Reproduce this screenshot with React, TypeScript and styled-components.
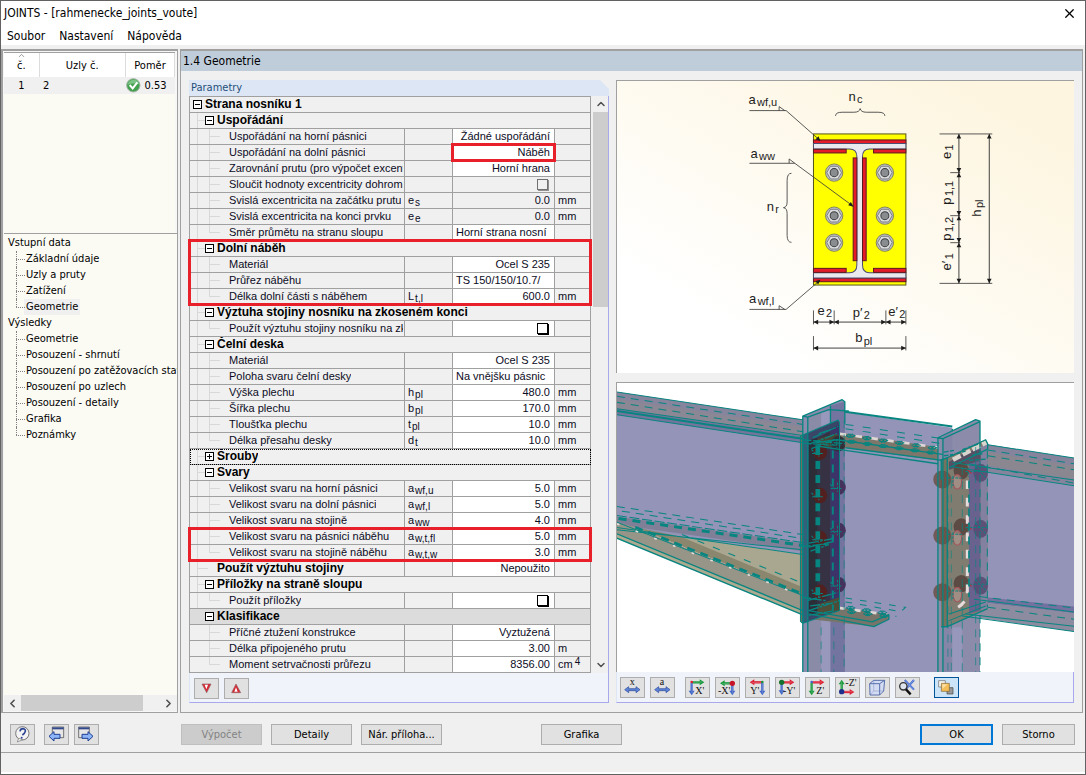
import React from "react";
import styled, { createGlobalStyle, css } from "styled-components";
import { X, ChevronUp, ChevronDown, ChevronLeft, ChevronRight } from "lucide-react";

const ui = `"DejaVu Sans Condensed", "DejaVu Sans", sans-serif`;
const gridFont = `"Liberation Sans", Arial, sans-serif`;

const GlobalStyle = createGlobalStyle`
  * { box-sizing: border-box; }
  body { margin: 0; background: #f0f0f0; color: #000; font: 11px/16px ${ui}; }
  button { font: inherit; color: inherit; padding: 0; }
`;

/* ---------- window frame ---------- */

const Window = styled.div`
  min-height: 100vh;
  display: flex;
  flex-direction: column;
  border: 1px solid #626262;
  background: #f0f0f0;
`;

const TitleBar = styled.header`
  display: flex;
  align-items: center;
  justify-content: space-between;
  height: 24px;
  padding: 0 8px 0 3px;
  background: #fff;
`;

const Title = styled.h1`
  margin: 0;
  font-size: 12px;
  font-weight: normal;
`;

const CloseButton = styled.button`
  display: flex;
  border: 0;
  background: none;
`;

const MenuBar = styled.nav`
  display: flex;
  gap: 14px;
  height: 20px;
  padding: 3px 6px 1px;
  margin-bottom: 4px;
  background: #fff;
`;

const MenuItem = styled.button`
  border: 0;
  background: none;
  font-size: 12px;
  line-height: 16px;
`;

const Workspace = styled.div`
  flex: 1;
  display: grid;
  grid-template-columns: 177px minmax(0, 1fr);
  gap: 2px;
  min-height: 0;
`;

/* ---------- left side ---------- */

const Sidebar = styled.aside`
  display: flex;
  flex-direction: column;
  min-width: 0;
  border: solid #a0a0a0;
  border-width: 2px 1px 1px 2px;
  padding: 1px 0 1px 1px;
  background: #f7f7f7;
`;

const CasePane = styled.div`
  height: 181px;
  margin-right: 2px;
  border-top: 1px solid #a0a0a0;
  background: #fbfbf4;
`;

const CaseTable = styled.table`
  width: 100%;
  border-collapse: collapse;
  table-layout: fixed;
`;

const CaseHead = styled.th`
  position: relative;
  height: 24px;
  padding: 2px 0 0;
  border-right: 1px solid #dcdcdc;
  background: #fff;
  font-weight: normal;
`;

const SortMark = styled(ChevronUp)`
  position: absolute;
  top: -2px;
  left: 13px;
  color: #777;
`;

const CaseCell = styled.td<{ $align?: string; $flush?: boolean }>`
  height: 17px;
  padding: ${(p) => (p.$flush ? "0" : "0 4px")};
  background: #f0f0f0;
  text-align: ${(p) => p.$align ?? "left"};
  vertical-align: middle;
`;

const Ratio = styled.span`
  display: flex;
  align-items: center;
  gap: 4px;
`;

const TreePane = styled.div`
  flex: 1;
  border-top: 1px solid #a0a0a0;
  padding: 1px 0 0 4px;
  overflow: hidden;
  background: #fbfbf4;
  white-space: nowrap;
`;

const TreeList = styled.ul`
  margin: 0;
  padding: 0;
  list-style: none;
`;

const TreeBranch = styled(TreeList)`
  margin-left: 8px;
`;

const TreeLeaf = styled.li`
  position: relative;
  height: 16px;
  padding-left: 8px;
  &::before {
    content: "";
    position: absolute;
    left: 0;
    top: 0;
    height: 16px;
    border-left: 1px dotted #808080;
  }
  &:last-child::before { height: 8px; }
  &::after {
    content: "";
    position: absolute;
    left: 0;
    top: 8px;
    width: 9px;
    border-top: 1px dotted #808080;
  }
`;

const TreeLink = styled.a<{ $current?: boolean }>`
  display: inline-block;
  height: 16px;
  padding: 0 2px;
  color: inherit;
  text-decoration: none;
  background: ${(p) => (p.$current ? "#f0f0f0" : "none")};
`;

const HScroll = styled.div`
  display: grid;
  grid-template-columns: 17px 122px 1fr 17px;
  height: 16px;
  background: #f0f0f0;
`;

const Thumb = styled.div`
  background: #cdcdcd;
`;

const ScrollButton = styled.button`
  display: flex;
  align-items: center;
  justify-content: center;
  border: 0;
  background: none;
  color: #505050;
`;

/* ---------- main panel ---------- */

const Main = styled.main`
  display: flex;
  flex-direction: column;
  min-width: 0;
  border: solid #a0a0a0;
  border-width: 2px 1px 1px 1px;
  margin-right: 2px;
`;

const PageTitle = styled.h2`
  height: 20px;
  margin: 0 0 9px;
  padding: 1px 2px;
  background: #bfcddb;
  font-size: 12px;
  font-weight: normal;
  line-height: 18px;
`;

const Columns = styled.div`
  flex: 1;
  display: grid;
  grid-template-columns: 420px minmax(0, 1fr);
  gap: 7px;
  padding: 0 8px 9px 8px;
`;

const ParamGroup = styled.section`
  display: flex;
  flex-direction: column;
`;

const GroupTitle = styled.h3`
  height: 16px;
  margin: 0;
  padding: 0 2px;
  background: #dce6f4;
  color: #1f4e79;
  font-size: 11px;
  font-weight: normal;
  clip-path: polygon(0 0, calc(100% - 9px) 0, 100% 9px, 100% 100%, 0 100%);
`;

const GridArea = styled.div`
  display: grid;
  grid-template-columns: minmax(0, 1fr) 17px;
  border-right: 1px solid #a8a8ec;
`;

const GridWrap = styled.div`
  position: relative;
`;

const Grid = styled.table`
  width: 100%;
  border-collapse: collapse;
  table-layout: fixed;
  background: #f0f0f0;
  color: #0c0c24;
  font: 11px/15px ${gridFont};
`;

const GridRow = styled.tr<{ $focus?: boolean }>`
  ${(p) => p.$focus && css`outline: 1px dotted #000; outline-offset: -1px;`}
`;

const GridCell = styled.td<{ $tone?: "edit" | "group"; $right?: boolean }>`
  height: 16px;
  padding: 0 4px 0 3px;
  border: 1px solid #a0a0a0;
  overflow: hidden;
  white-space: nowrap;
  line-height: 15px;
  text-align: ${(p) => (p.$right ? "right" : "left")};
  background: ${(p) => (p.$tone === "edit" ? "#fff" : p.$tone === "group" ? "#dcdcdc" : "#f0f0f0")};
`;

const NameCell = styled(GridCell)`
  padding: 0 1px 0 2px;
`;

const NameLine = styled.div`
  display: flex;
  height: 15px;
  overflow: hidden;
`;

const NameText = styled.span<{ $bold?: boolean; $leaf?: boolean }>`
  padding-left: ${(p) => (p.$leaf ? 13 : 1)}px;
  min-width: 0;
  overflow: hidden;
  color: ${(p) => (p.$bold ? "#000" : "inherit")};
  font-weight: ${(p) => (p.$bold ? "bold" : "normal")};
  font-size: ${(p) => (p.$bold ? 12 : 11)}px;
`;

const Guide = styled.span<{ $line?: "full" | "half"; $stub?: boolean }>`
  position: relative;
  flex: none;
  width: 12px;
  &::before {
    content: "";
    position: absolute;
    left: 5px;
    top: 0;
    height: ${(p) => (p.$line === "full" ? 15 : p.$line === "half" ? 8 : 0)}px;
    border-left: 1px solid #d8d8d8;
  }
  &::after {
    content: "";
    position: absolute;
    left: 5px;
    top: 7px;
    width: ${(p) => (p.$stub ? 11 : 0)}px;
    border-top: 1px solid #d8d8d8;
  }
`;

const Expander = styled.button`
  position: relative;
  flex: none;
  width: 9px;
  height: 9px;
  margin: 3px 2px 3px 1px;
  border: 1px solid #000;
  background:
    linear-gradient(#000, #000) 50% 50% / 5px 1px no-repeat,
    #fff;
  &[aria-expanded="false"] {
    background:
      linear-gradient(#000, #000) 50% 50% / 5px 1px no-repeat,
      linear-gradient(#000, #000) 50% 50% / 1px 5px no-repeat,
      #fff;
  }
`;

const Check = styled.input`
  appearance: none;
  display: block;
  width: 11px;
  height: 11px;
  margin: 2px 2px 2px auto;
  border: 1px solid #000;
  box-shadow: 1px 1px 0 #000;
  background: #fff;
  &:disabled {
    border-color: #707070;
    box-shadow: 1px 1px 0 #909090;
    background: #f0f0f0;
  }
`;

const Sub = styled.sub`
  margin-left: 1px;
  font-size: 10px;
  line-height: 0;
  vertical-align: -2px;
`;

const Sup = styled.sup`
  margin-left: 2px;
  font-size: 10px;
  line-height: 0;
  vertical-align: 3px;
`;

/* Red frame laid over a span of grid rows. */
const Marker = styled.div<{ $row: number; $rows: number; $value?: boolean }>`
  position: absolute;
  top: ${(p) => p.$row * 16 - 1}px;
  left: ${(p) => (p.$value ? "262px" : "-1px")};
  right: ${(p) => (p.$value ? "35px" : "-1px")};
  height: ${(p) => p.$rows * 16 + 3}px;
  border: 3px solid #e8202a;
  pointer-events: none;
`;

const VScroll = styled.div`
  display: grid;
  grid-template-rows: 16px 195px 1fr 16px;
  margin-left: 2px;
`;

const ButtonStrip = styled.div`
  display: flex;
  flex: 1;
  gap: 5px;
  padding: 5px 4px 2px;
  border: solid #a8a8ec;
  border-width: 0 1px 1px 0;
  border-left: 1px solid #dce6f4;
  background: #f0f4fa;
`;

const IconButton = styled.button<{ $pressed?: boolean; $gap?: number }>`
  display: flex;
  width: 25px;
  height: 21px;
  margin-left: ${(p) => p.$gap ?? 0}px;
  border: 1px solid ${(p) => (p.$pressed ? "#005499" : "#adadad")};
  background: ${(p) => (p.$pressed ? "#cce4f7" : "#e1e1e1")};
  & > svg { margin: -1px; flex: none; }
`;

const Graphics = styled.section`
  display: grid;
  grid-template-rows: 293px 299px 1fr;
  min-width: 0;
`;

const Picture = styled.div`
  border: 1px solid #a0a0a0;
  border-width: 1px 0 0 1px;
  background: linear-gradient(30deg, #fff 20%, #fdf5df 90%);
  & > svg { display: block; width: 100%; height: 100%; }
`;

const ModelView = styled(Picture)`
  margin-top: 9px;
  background: #fff;
`;

const ViewStrip = styled(ButtonStrip)`
  padding-left: 3px;
`;

/* ---------- footer ---------- */

const Footer = styled.footer`
  display: flex;
  gap: 9px;
  padding: 11px 10px 7px 9px;
`;

const IconGroup = styled.div`
  display: flex;
  gap: 5px;
  width: 162px;
`;

const DialogButton = styled.button<{ $wide?: boolean; $offset?: string; $main?: boolean }>`
  width: ${(p) => (p.$wide ? 81 : 73)}px;
  height: 21px;
  margin-left: ${(p) => p.$offset ?? "0"};
  border: ${(p) => (p.$main ? "2px solid #0078d7" : "1px solid #adadad")};
  background: #e1e1e1;
  line-height: 16px;
  &:disabled { background: #cccccc; border-color: #bfbfbf; color: #838383; }
`;

const StatusBar = styled.div`
  height: 22px;
  border-top: 1px solid #a0a0a0;
  border-bottom: 2px solid #fff;
`;

/* ---------- data ---------- */

type Row = {
  kind: "root" | "group" | "boldleaf" | "leaf";
  name: string;
  sym?: string;
  sub?: string;
  value?: string;
  unit?: string;
  exp?: string;
  check?: "on" | "disabled";
  locked?: boolean;
  last?: boolean;
  closed?: boolean;
  shaded?: boolean;
  start?: boolean;
};

const rows: Row[] = [
  { kind: "root", name: "Strana nosníku 1" },
  { kind: "group", name: "Uspořádání" },
  { kind: "leaf", name: "Uspořádání na horní pásnici", value: "Žádné uspořádání" },
  { kind: "leaf", name: "Uspořádání na dolní pásnici", value: "Náběh" },
  { kind: "leaf", name: "Zarovnání prutu (pro výpočet excentricity)", value: "Horní hrana" },
  { kind: "leaf", name: "Sloučit hodnoty excentricity dohromady", check: "disabled", locked: true },
  { kind: "leaf", name: "Svislá excentricita na začátku prutu", sym: "e", sub: "s", value: "0.0", unit: "mm", locked: true },
  { kind: "leaf", name: "Svislá excentricita na konci prvku", sym: "e", sub: "e", value: "0.0", unit: "mm", locked: true },
  { kind: "leaf", name: "Směr průmětu na stranu sloupu", value: "Horní strana nosní", last: true, start: true },
  { kind: "group", name: "Dolní náběh" },
  { kind: "leaf", name: "Materiál", value: "Ocel S 235" },
  { kind: "leaf", name: "Průřez náběhu", value: "TS 150/150/10.7/", start: true },
  { kind: "leaf", name: "Délka dolní části s náběhem", sym: "L", sub: "t,l", value: "600.0", unit: "mm", last: true },
  { kind: "group", name: "Výztuha stojiny nosníku na zkoseném konci" },
  { kind: "leaf", name: "Použít výztuhu stojiny nosníku na zkoseném konci", check: "on", last: true },
  { kind: "group", name: "Čelní deska" },
  { kind: "leaf", name: "Materiál", value: "Ocel S 235" },
  { kind: "leaf", name: "Poloha svaru čelní desky", value: "Na vnějšku pásnic", start: true },
  { kind: "leaf", name: "Výška plechu", sym: "h", sub: "pl", value: "480.0", unit: "mm" },
  { kind: "leaf", name: "Šířka plechu", sym: "b", sub: "pl", value: "170.0", unit: "mm" },
  { kind: "leaf", name: "Tloušťka plechu", sym: "t", sub: "pl", value: "10.0", unit: "mm" },
  { kind: "leaf", name: "Délka přesahu desky", sym: "d", sub: "t", value: "10.0", unit: "mm", last: true },
  { kind: "group", name: "Šrouby", closed: true },
  { kind: "group", name: "Svary" },
  { kind: "leaf", name: "Velikost svaru na horní pásnici", sym: "a", sub: "wf,u", value: "5.0", unit: "mm" },
  { kind: "leaf", name: "Velikost svaru na dolní pásnici", sym: "a", sub: "wf,l", value: "5.0", unit: "mm" },
  { kind: "leaf", name: "Velikost svaru na stojině", sym: "a", sub: "ww", value: "4.0", unit: "mm" },
  { kind: "leaf", name: "Velikost svaru na pásnici náběhu", sym: "a", sub: "w,t,fl", value: "5.0", unit: "mm" },
  { kind: "leaf", name: "Velikost svaru na stojině náběhu", sym: "a", sub: "w,t,w", value: "3.0", unit: "mm", last: true },
  { kind: "boldleaf", name: "Použít výztuhu stojiny", value: "Nepoužito" },
  { kind: "group", name: "Příložky na straně sloupu" },
  { kind: "leaf", name: "Použít příložky", check: "on", last: true },
  { kind: "group", name: "Klasifikace", shaded: true },
  { kind: "leaf", name: "Příčné ztužení konstrukce", value: "Vyztužená" },
  { kind: "leaf", name: "Délka připojeného prutu", value: "3.00", unit: "m" },
  { kind: "leaf", name: "Moment setrvačnosti průřezu", value: "8356.00", unit: "cm", exp: "4", last: true },
];

const SHADED_FROM = rows.findIndex((r) => r.shaded);

const tree = [
  { name: "Vstupní data", items: ["Základní údaje", "Uzly a pruty", "Zatížení", "Geometrie"], current: 3 },
  {
    name: "Výsledky",
    items: ["Geometrie", "Posouzení - shrnutí", "Posouzení po zatěžovacích stavech", "Posouzení po uzlech", "Posouzení - detaily", "Grafika", "Poznámky"],
    current: -1,
  },
];

function ParameterRow({ row, index }: { row: Row; index: number }) {
  const trunk = index < SHADED_FROM ? "full" : undefined;
  if (row.kind === "root" || row.kind === "group") {
    return (
      <GridRow $focus={row.closed}>
        <NameCell colSpan={4} $tone={row.shaded ? "group" : undefined}>
          <NameLine>
            {row.kind === "group" && <Guide $line={trunk} $stub={!!trunk} />}
            <Expander aria-expanded={!row.closed} aria-label={row.name} />
            <NameText $bold>{row.name}</NameText>
          </NameLine>
        </NameCell>
      </GridRow>
    );
  }
  const id = `param-${index}`;
  return (
    <GridRow>
      <NameCell>
        <NameLine>
          <Guide $line={trunk} $stub={row.kind === "boldleaf"} />
          <Guide $line={row.kind === "boldleaf" ? undefined : row.last ? "half" : "full"} $stub={row.kind === "leaf"} />
          <NameText as={row.check ? "label" : "span"} htmlFor={row.check ? id : undefined} $bold={row.kind === "boldleaf"} $leaf={row.kind === "leaf"}>
            {row.name}
          </NameText>
        </NameLine>
      </NameCell>
      <GridCell>
        {row.sym}
        {row.sub && <Sub>{row.sub}</Sub>}
      </GridCell>
      <GridCell $tone={row.locked ? undefined : "edit"} $right={!row.start}>
        {row.check ? <Check type="checkbox" id={id} disabled={row.check === "disabled"} /> : row.value}
      </GridCell>
      <GridCell>
        {row.unit}
        {row.exp && <Sup>{row.exp}</Sup>}
      </GridCell>
    </GridRow>
  );
}

/* ---------- icons ---------- */

const RED = "#dc1f35";
const GREEN = "#17983c";
const BLUE = "#3f66c8";

function Arrow({ x, y, dir, len, color }: { x: number; y: number; dir: number; len: number; color: string }) {
  return (
    <g transform={`translate(${x} ${y}) rotate(${dir})`}>
      <path d={`M0 0H${len - 10}`} stroke={color} strokeWidth="7" />
      <path d={`M${len - 14} -9L${len} 0L${len - 14} 9Z`} fill={color} />
      <path d={`M0 -1H${len - 6}`} stroke="#fff" strokeOpacity=".35" strokeWidth="2" />
    </g>
  );
}

function Glyph({ children }: { children: React.ReactNode }) {
  return (
    <svg width="25" height="21" viewBox="0 0 75 63" aria-hidden="true">
      {children}
    </svg>
  );
}

function Letter({ x, y, t, size = 30 }: { x: number; y: number; t: string; size?: number }) {
  return (
    <text x={x} y={y} fontFamily="'Liberation Serif', serif" fontSize={size} fill="#111">
      {t}
    </text>
  );
}

function Span() {
  return (
    <path d="M14 38L26 29V35H48V29L60 38L48 47V41H26V47Z" fill="#5c83d6" stroke="#27479b" strokeWidth="2" />
  );
}

const viewIcons: { label: string; gap?: number; pressed?: boolean; art: React.ReactNode }[] = [
  { label: "Kóty x", art: <><Letter x={29} y={25} t="x" /><Span /></> },
  { label: "Kóty a", art: <><Letter x={29} y={25} t="a" /><Span /></> },
  { label: "Pohled X", gap: 5, art: <><Arrow x={20} y={16} dir={0} len={38} color={GREEN} /><Arrow x={20} y={18} dir={90} len={37} color={BLUE} /><circle cx="20" cy="15" r="4" fill={RED} /><Letter x={31} y={50} t="X'" /></> },
  { label: "Pohled -X", art: <><Arrow x={52} y={19} dir={180} len={37} color={GREEN} /><Arrow x={52} y={19} dir={90} len={36} color={BLUE} /><circle cx="52" cy="19" r="8" fill="#c81428" /><Letter x={9} y={51} t="-X'" /></> },
  { label: "Pohled Y", art: <><Arrow x={52} y={16} dir={180} len={38} color={RED} /><Arrow x={52} y={18} dir={90} len={37} color={BLUE} /><circle cx="52" cy="15" r="4" fill={GREEN} /><Letter x={16} y={50} t="Y'" /></> },
  { label: "Pohled -Y", art: <><Arrow x={20} y={16} dir={0} len={38} color={RED} /><Arrow x={20} y={18} dir={90} len={36} color={BLUE} /><circle cx="20" cy="16" r="8" fill="#14702e" /><Letter x={24} y={50} t="-Y'" /></> },
  { label: "Pohled Z", art: <><Arrow x={20} y={16} dir={0} len={38} color={RED} /><Arrow x={20} y={18} dir={90} len={37} color={GREEN} /><circle cx="20" cy="15" r="4" fill={BLUE} /><Letter x={34} y={50} t="Z'" /></> },
  { label: "Pohled -Z", art: <><Arrow x={20} y={44} dir={270} len={36} color={GREEN} /><Arrow x={20} y={45} dir={0} len={38} color={RED} /><circle cx="20" cy="44" r="8" fill="#1c2f8c" /><Letter x={31} y={28} t="-Z'" /></> },
  {
    label: "Izometrie",
    art: (
      <g fill="#d3dcf2" stroke="#5870ac" strokeWidth="3" strokeLinejoin="round">
        <path d="M14 20L26 10H59L56 42L44 54H15Z" />
        <path d="M14 20H44L44 54M44 20L59 10" fill="none" />
        <path d="M26 10V42H56M26 42L15 54" fill="none" strokeWidth="1" />
      </g>
    ),
  },
  {
    label: "Zrušit zvětšení",
    art: (
      <g fill="none">
        <path d="M29 9L57 38M57 9L31 38" stroke="#4068cc" strokeWidth="6" />
        <path d="M29 9L57 38M57 9L31 38" stroke="#9ab4f0" strokeWidth="2" />
        <circle cx="25" cy="28" r="11" stroke="#333" strokeWidth="4" fill="#dce6f4" fillOpacity=".7" />
        <path d="M33 37L47 52" stroke="#111" strokeWidth="7" />
      </g>
    ),
  },
  {
    label: "Zobrazit vše",
    gap: 9,
    pressed: true,
    art: (
      <g strokeWidth="2">
        <path d="M14 11H34V30H14Z" fill="#f8f8f4" stroke="#666" />
        <path d="M39 32H57V51H39Z" fill="#999" stroke="#444" />
        <path d="M22 19H46V43H22Z" fill="#f4bf59" stroke="#7d6230" />
        <path d="M25 22H40L25 36Z" fill="#fbe0a4" />
      </g>
    ),
  },
];

function WindowArrow({ back }: { back?: boolean }) {
  return (
    <Glyph>
      <path d={back ? "M25 9H59V41H25Z" : "M14 9H46V41H14Z"} fill="#e6e6e6" stroke="#3c3c3c" strokeWidth="2" />
      <path d={back ? "M25 10H59V16H25Z" : "M14 10H46V16H14Z"} fill="#34498c" />
      <path
        d={back ? "M15 37L30 23V31H48V43H30V51Z" : "M57 37L42 23V31H24V43H42V51Z"}
        fill="#8db4f6"
        stroke="#1d3f94"
        strokeWidth="3"
      />
    </Glyph>
  );
}

function OkBadge() {
  return (
    <svg width="15" height="15" viewBox="0 0 45 45" aria-hidden="true">
      <circle cx="22" cy="22" r="20" fill="#43a04f" stroke="#a5b5a7" strokeWidth="3" />
      <path d="M5 20A18 18 0 0 1 40 18Q20 14 5 20Z" fill="#7cc486" />
      <path d="M11 21L20 31L34 13" fill="none" stroke="#fff" strokeWidth="6" />
    </svg>
  );
}

/* ---------- end plate sketch ---------- */

function Label({ x, y, t, s, turn }: { x: number; y: number; t: string; s: string; turn?: boolean }) {
  return (
    <text x={x} y={y} fontFamily={gridFont} fontSize="39" fill="#1c1c1c" transform={turn ? `rotate(-90 ${x} ${y})` : undefined}>
      {t}
      <tspan dx="4" dy="7" fontSize="33">{s}</tspan>
    </text>
  );
}

function Bolt({ x, y }: { x: number; y: number }) {
  return (
    <g transform={`translate(${x} ${y})`} stroke="#55585c">
      <circle r="26" fill="#bfc1c3" strokeWidth="2" />
      <path d="M-22 0L-11 -19H11L22 0L11 19H-11Z" fill="#dcddde" strokeWidth="2" />
      <circle r="12" fill="#8a8d90" stroke="#3c3e40" strokeWidth="3" />
    </g>
  );
}

function HDim({ x1, x2, y }: { x1: number; x2: number; y: number }) {
  return (
    <g fill="#1c1c1c">
      <path d={`M${x1} ${y}H${x2}`} stroke="#1c1c1c" strokeWidth="2.5" />
      <path d={`M${x1} ${y}l14 -7v14zM${x2} ${y}l-14 -7v14z`} />
    </g>
  );
}

function VDim({ y1, y2, x }: { y1: number; y2: number; x: number }) {
  return (
    <g fill="#1c1c1c">
      <path d={`M${x} ${y1}V${y2}`} stroke="#1c1c1c" strokeWidth="2.5" />
      <path d={`M${x} ${y1}l-7 14h14zM${x} ${y2}l-7 -14h14z`} />
    </g>
  );
}

function PlateSketch() {
  const weld = { fill: "#e51c28", stroke: "#5a1a20", strokeWidth: 3 };
  return (
    <svg viewBox="5 8 1370 874" role="img" aria-label="Čelní deska">
      <rect x="594" y="166" width="277" height="453" fill="#ffff00" stroke="#55551c" strokeWidth="3" />
      <rect x="594" y="184" width="277" height="11" {...weld} />
      <rect x="594" y="598" width="277" height="11" {...weld} />
      <path
        d="M594 195H871V211H762Q741 211 741 234V559Q741 582 762 582H871V598H594V582H702Q724 582 724 559V234Q724 211 702 211H594Z"
        fill="#e9e9ee"
        stroke="#4d4d72"
        strokeWidth="3"
      />
      <rect x="594" y="212" width="98" height="11" {...weld} />
      <rect x="774" y="212" width="97" height="11" {...weld} />
      <rect x="594" y="569" width="98" height="12" {...weld} />
      <rect x="774" y="569" width="97" height="12" {...weld} />
      <rect x="713" y="238" width="11" height="308" {...weld} />
      <rect x="741" y="238" width="11" height="308" {...weld} />
      {[282, 411, 492].map((y) => (
        <g key={y}>
          <Bolt x={656} y={y} />
          <Bolt x={808} y={y} />
        </g>
      ))}
      <g fill="none" stroke="#3a3a3a" strokeWidth="2.5">
        <path d="M402 96H512L612 184M402 254H538L712 382M402 692H512L612 606" />
        <path d="M491 84V96M491 84L508 96M521 241V254M521 241L538 254M491 681V692M491 681L508 692" />
        <path d="M660 112Q660 101 680 101H715Q732 101 734 90Q736 101 753 101H788Q808 101 808 112" />
        <path d="M528 284Q515 284 515 305V370Q515 386 504 387Q515 388 515 405V470Q515 491 528 491" />
        <path d="M972 166H1130M972 614H1130M1004 282H1034M1004 411H1034M1004 492H1034" />
        <path d="M594 695V737M656 695V737M811 695V737M871 695V737M594 772V815M871 772V815" />
      </g>
      <path d="M615 187L600 183L609 173ZM714 384L698 380L706 370ZM615 603L608 617L600 607Z" fill="#1c1c1c" />
      <VDim x={1030} y1={166} y2={282} />
      <VDim x={1030} y1={282} y2={411} />
      <VDim x={1030} y1={411} y2={492} />
      <VDim x={1030} y1={492} y2={614} />
      <VDim x={1121} y1={166} y2={614} />
      <HDim y={730} x1={594} x2={656} />
      <HDim y={730} x1={656} x2={811} />
      <HDim y={730} x1={811} x2={871} />
      <HDim y={808} x1={594} x2={871} />
      <Label x={399} y={75} t="a" s="wf,u" />
      <Label x={405} y={237} t="a" s="ww" />
      <Label x={401} y={673} t="a" s="wf,l" />
      <Label x={699} y={67} t="n" s="c" />
      <Label x={454} y={396} t="n" s="r" />
      <Label x={606} y={709} t="e" s="2" />
      <Label x={712} y={715} t="p′" s="2" />
      <Label x={818} y={711} t="e′" s="2" />
      <Label x={719} y={791} t="b" s="pl" />
      <Label x={1006} y={241} t="e" s="1" turn />
      <Label x={1006} y={378} t="p" s="1,1" turn />
      <Label x={1006} y={486} t="p" s="1,2" turn />
      <Label x={1006} y={575} t="e′" s="1" turn />
      <Label x={1096} y={414} t="h" s="pl" turn />
    </svg>
  );
}

/* ---------- joint model ---------- */

const TEAL = "#078580";

function BoltPair({ x, y, tone }: { x: number; y: number; tone: string }) {
  return (
    <g>
      <ellipse cx={x} cy={y} rx="21" ry="23" fill={tone} />
      <path d={`M${x - 26} ${y - 8}L${x - 10} ${y + 8}M${x - 24} ${y + 4}H${x + 8}M${x - 4} ${y - 14}V${y + 14}`} stroke={TEAL} strokeWidth="3" strokeDasharray="8 4" />
    </g>
  );
}

/* Small crossed ellipses spread evenly along a weld seam. */
function WeldMarks({ x1, y1, x2, y2, n }: { x1: number; y1: number; x2: number; y2: number; n: number }) {
  return (
    <g fill="none" stroke={TEAL} strokeWidth="3">
      {Array.from({ length: n }, (_, i) => {
        const t = n > 1 ? i / (n - 1) : 0;
        const x = x1 + (x2 - x1) * t;
        const y = y1 + (y2 - y1) * t;
        return <path key={i} d={`M${x - 13} ${y}Q${x} ${y - 9} ${x + 13} ${y}Q${x} ${y + 9} ${x - 13} ${y}M${x - 6} ${y - 6}L${x + 6} ${y + 6}M${x + 6} ${y - 6}L${x - 6} ${y + 6}`} />;
      })}
    </g>
  );
}

function JointModel() {
  return (
    <svg viewBox="5 8 1370 866" preserveAspectRatio="xMidYMid slice" role="img" aria-label="Model přípoje">
      {/* rafter */}
      <path d="M5 35L562 118V522L5 441Z" fill="#9494b8" />
      <path d="M5 35L562 118V168L5 85Z" fill="#87859d" />
      <path d="M5 56L562 139V168L5 85Z" fill="#8c8794" />
      <path d="M5 85L562 168V187L5 103Z" fill="#74749c" />
      <path d="M5 408L562 488V512L5 432Z" fill="#7f7f98" />

      {/* haunch */}
      <path d="M110 456L562 522V645Z" fill="#a9a790" />
      <path d="M60 440L195 468L562 620V645Z" fill="#8b866e" />
      <path d="M5 425L60 440L562 645V703L5 473Z" fill="#979488" />
      <path d="M5 460L562 688V703L5 473Z" fill="#aeaa90" />

      {/* column web and left flange */}
      <path d="M640 88L1010 142V880H640Z" fill="#9494b8" />
      <path d="M645 88L1010 138" stroke={TEAL} strokeWidth="6" />
      <path d="M562 107L680 58L688 64V880H562Z" fill="#8b8bad" />
      <path d="M577 110L617 95V880H577Z" fill="#8a8ba6" />
      <path d="M617 95L645 88V880H617Z" fill="#9898bd" />
      <path d="M645 76L688 64V880H645Z" fill="#7474a0" />

      {/* web stiffeners */}
      <path d="M600 175L660 155L1000 205V245L690 202L600 190Z" fill="#7d776b" />
      <path d="M672 160L1000 206" stroke="#ddd7d6" strokeWidth="8" strokeDasharray="20 28" />
      <path d="M580 715L665 680L820 700V715L775 738Z" fill="#78746a" />
      <path d="M670 682L815 702" stroke="#ddd7d6" strokeWidth="8" strokeDasharray="18 30" />

      {/* left end plate */}
      <path d="M555 167L668 119L672 126V690L562 728L555 722Z" fill="#3a4668" />
      <path d="M580 180L607 172V700L580 706Z" fill="#2d2d38" />
      <path d="M607 172L645 152V680L607 697Z" fill="#363244" />
      <path d="M645 145L672 132V690H645Z" fill="#3c3468" />
      <path d="M555 167L562 164V728L555 722Z" fill="#6d705f" />
      <path d="M562 164L577 158V718L562 728Z" fill="#35607a" />
      <path d="M606 175L660 160L688 175V205L606 196Z" fill="#4a4636" />
      <path d="M606 672L672 650V690L606 705Z" fill="#4f4c38" />
      {[215, 345, 474, 635].map((y) => (
        <BoltPair key={y} x={614} y={y} tone="#52201f" />
      ))}
      <BoltPair x={668} y={190} tone="#33303a" />
      {[320, 450, 612].map((y) => (
        <BoltPair key={y} x={670} y={y} tone="#46305c" />
      ))}

      {/* right beam */}
      <path d="M1100 190L1375 233V753L1045 705V200Z" fill="#9494b8" />
      <path d="M1100 190L1375 233V316L1040 262V240Z" fill="#85849c" />
      <path d="M1116 215L1375 256V296L1116 255Z" fill="#8a8790" />
      <path d="M1090 648L1375 678V698L1090 664Z" fill="#73719f" />
      <path d="M1060 690L1090 664L1375 698V753L1060 706Z" fill="#8c8b9f" />

      {/* right column flange */}
      <path d="M967 172L1080 118L1093 122V880H967Z" fill="#8c8caa" />
      <path d="M982 165L1010 153V880H982Z" fill="#8585a8" />
      <path d="M1010 740H1040V880H1010Z" fill="#9797bc" />

      {/* right end plate */}
      <path d="M977 238L1110 178L1116 190V684L995 738H977Z" fill="#807c70" />
      <path d="M1060 215L1095 200V690L1060 700Z" fill="#6a628e" />
      <path d="M1095 200L1116 190V684L1095 690Z" fill="#83819f" />
      <path d="M977 238L995 232V738H977Z" fill="#77725f" />
      <path d="M1000 245L1050 215L1095 208V240L1000 268Z" fill="#574f64" />
      {[297, 465, 635].map((y) => (
        <g key={y}>
          <circle cx="980" cy={y} r="27" fill="#6a4f44" fillOpacity=".85" />
          <ellipse cx="1037" cy={y - 26} rx="23" ry="26" fill="#57463f" fillOpacity=".9" />
          <ellipse cx="1095" cy={y - 20} rx="22" ry="27" fill="#594b73" fillOpacity=".9" />
          <ellipse cx="1025" cy={y + 7} rx="13" ry="22" fill="#b59a90" fillOpacity=".6" stroke="#a5525a" strokeWidth="3" />
          <path d={`M995 ${y - 4}H1040M1050 ${y - 24}H1116M1058 ${y - 34}V${y - 8}M1080 ${y - 38}L1110 ${y - 6}M1012 ${y - 10}V${y + 20}`} stroke={TEAL} strokeWidth="3" strokeDasharray="8 4" />
          <path d={`M1055 ${y - 30}L1068 ${y - 18}`} stroke="#a33a44" strokeWidth="4" />
        </g>
      ))}
      <path d="M1055 300V640Q1050 672 1012 688" fill="none" stroke="#e6dcdc" strokeWidth="9" strokeDasharray="26 26" />
      <path d="M1012 238L1112 186" stroke="#d8d4ce" strokeWidth="13" strokeDasharray="26 7" />
      <path d="M977 297V238L995 232V738H977" fill="none" stroke={TEAL} strokeWidth="4" />

      {/* solid edges */}
      <g fill="none" stroke={TEAL} strokeWidth="3" strokeLinejoin="round">
        <path d="M5 35L562 118" />
        <path d="M5 92L562 175" strokeWidth="6" />
        <path d="M5 85L562 165M5 103L562 187" />
        <path d="M5 441L562 522M5 448L562 508" />
        <path d="M5 425L562 645" />
        <path d="M5 460L562 690M5 473L562 703" strokeWidth="4" />
        <path d="M562 880V107L680 58L688 64V130M577 880V110L562 107M577 110L640 88L700 92M645 130V76" strokeWidth="4" />
        <path d="M555 167L668 119L672 126V690L562 728L555 722V167M562 164V728" />
        <path d="M600 187L665 178L980 222M600 196L690 210L967 250M690 202L980 240" strokeWidth="4" />
        <path d="M580 700L775 738L820 716V702M580 690L770 724L820 702" strokeWidth="4" />
        <path d="M967 880V172L1080 118L1093 122V200M967 172L982 175V880M982 175L1093 124M1010 146V153" strokeWidth="4" />
        <path d="M995 232L1110 178L1116 190V206M977 738H995L1116 684M1000 262L1116 206" strokeWidth="4" />
        <path d="M1010 246L1375 299M1005 258L1375 316M1116 193L1375 233" />
        <path d="M1050 700L1375 737M1040 706L1375 753M1075 656L1375 694" />
        <path d="M1000 700L1110 664M1000 720L1110 676" />
      </g>

      {/* hidden edges */}
      <g fill="none" stroke={TEAL} strokeWidth="3" strokeDasharray="24 18">
        <path d="M5 48L562 132M5 66L562 154" />
        <path d="M5 378L562 462M20 392L562 474" />
        <path d="M5 405L562 486" strokeDasharray="30 8" />
        <path d="M10 414L562 495" strokeWidth="9" />
        <path d="M60 440L562 640" strokeWidth="8" />
        <path d="M200 462L562 608" strokeDasharray="22 28" />
        <path d="M617 740V880M655 740V880M686 120V880" strokeWidth="2" />
        <path d="M607 200V660" strokeWidth="14" />
        <path d="M652 210V690" strokeWidth="6" />
        <path d="M690 132L980 175M690 145L980 190" strokeDasharray="24 28" />
        <path d="M690 652L870 680L840 708M690 664L850 692" strokeDasharray="20 24" />
        <path d="M997 300V880M1007 300V880M1040 260V880M1080 200V880" strokeWidth="2" />
        <path d="M1060 300V650" strokeWidth="5" />
        <path d="M1093 200V880M1115 210V680" />
        <path d="M1116 209L1375 250M1116 226L1375 268M1060 250L1375 308" />
        <path d="M1090 648L1375 682M1116 680L1375 716" />
      </g>
      <WeldMarks x1={705} y1={166} x2={950} y2={202} n={6} />
      <WeldMarks x1={708} y1={184} x2={945} y2={216} n={6} />
      <WeldMarks x1={705} y1={682} x2={800} y2={696} n={3} />
      <WeldMarks x1={708} y1={694} x2={805} y2={706} n={3} />
      <path d="M5 430L562 646" stroke="#e3dcd8" strokeWidth="5" strokeDasharray="8 52" fill="none" />
      <path d="M592 172L668 138M588 205L660 176M585 190L664 160M610 160L655 144M580 488L655 474M580 500L650 484M585 512L640 492M575 660L665 636M580 690L672 660M580 704L660 690M584 676L650 668" stroke={TEAL} strokeWidth="4" strokeDasharray="30 4 8 4" fill="none" />
      <path d="M562 178L690 190M562 188L640 194M560 498L640 490M562 650L630 660" stroke={TEAL} strokeWidth="4" strokeDasharray="26 5" fill="none" />
      <path d="M1005 226L1050 212M1040 208L1090 190M1060 240L1112 236M1070 224L1100 220M985 215L1015 210M985 226L1012 222" stroke={TEAL} strokeWidth="4" strokeDasharray="14 4" fill="none" />
    </svg>
  );
}

/* ---------- page ---------- */

export default function App() {
  return (
    <Window>
      <GlobalStyle />
      <TitleBar>
        <Title>JOINTS - [rahmenecke_joints_voute]</Title>
        <CloseButton aria-label="Zavřít">
          <X size={15} strokeWidth={2} />
        </CloseButton>
      </TitleBar>
      <MenuBar>
        {["Soubor", "Nastavení", "Nápověda"].map((m) => (
          <MenuItem key={m}>{m}</MenuItem>
        ))}
      </MenuBar>

      <Workspace>
        <Sidebar>
          <CasePane>
            <CaseTable>
              <colgroup>
                <col style={{ width: 35 }} />
                <col />
                <col style={{ width: 49 }} />
              </colgroup>
              <thead>
                <tr>
                  <CaseHead>
                    <SortMark size={9} />č.
                  </CaseHead>
                  <CaseHead>Uzly č.</CaseHead>
                  <CaseHead>Poměr</CaseHead>
                </tr>
              </thead>
              <tbody>
                <tr>
                  <CaseCell $align="center">1</CaseCell>
                  <CaseCell>2</CaseCell>
                  <CaseCell $flush>
                    <Ratio>
                      <OkBadge />
                      0.53
                    </Ratio>
                  </CaseCell>
                </tr>
              </tbody>
            </CaseTable>
          </CasePane>
          <TreePane>
            <TreeList>
              {tree.map((branch) => (
                <li key={branch.name}>
                  {branch.name}
                  <TreeBranch>
                    {branch.items.map((item, i) => (
                      <TreeLeaf key={item}>
                        <TreeLink href="#" $current={i === branch.current}>
                          {item}
                        </TreeLink>
                      </TreeLeaf>
                    ))}
                  </TreeBranch>
                </li>
              ))}
            </TreeList>
          </TreePane>
          <HScroll>
            <ScrollButton aria-label="Posunout vlevo">
              <ChevronLeft size={13} strokeWidth={3} />
            </ScrollButton>
            <Thumb />
            <span />
            <ScrollButton aria-label="Posunout vpravo">
              <ChevronRight size={13} strokeWidth={3} />
            </ScrollButton>
          </HScroll>
        </Sidebar>

        <Main>
          <PageTitle>1.4 Geometrie</PageTitle>
          <Columns>
            <ParamGroup>
              <GroupTitle>Parametry</GroupTitle>
              <GridArea>
                <GridWrap>
                  <Grid>
                    <colgroup>
                      <col />
                      <col style={{ width: 48 }} />
                      <col style={{ width: 102 }} />
                      <col style={{ width: 36 }} />
                    </colgroup>
                    <tbody>
                      {rows.map((row, i) => (
                        <ParameterRow key={i} row={row} index={i} />
                      ))}
                    </tbody>
                  </Grid>
                  <Marker $row={3} $rows={1} $value />
                  <Marker $row={9} $rows={4} />
                  <Marker $row={27} $rows={2} />
                </GridWrap>
                <VScroll>
                  <ScrollButton aria-label="Posunout nahoru">
                    <ChevronUp size={12} strokeWidth={3} />
                  </ScrollButton>
                  <Thumb />
                  <span />
                  <ScrollButton aria-label="Posunout dolů">
                    <ChevronDown size={12} strokeWidth={3} />
                  </ScrollButton>
                </VScroll>
              </GridArea>
              <ButtonStrip>
                <IconButton aria-label="Rozbalit vše">
                  <Glyph>
                    <path d="M24 18H51L38 44Z" fill="#d92632" stroke="#8f6064" strokeWidth="2" />
                    <path d="M32 20H42L37 34Z" fill="#fff" />
                  </Glyph>
                </IconButton>
                <IconButton aria-label="Sbalit vše">
                  <Glyph>
                    <path d="M23 44H50L36 18Z" fill="#d92632" stroke="#8f6064" strokeWidth="2" />
                    <path d="M31 41H41L36 28Z" fill="#fff" />
                  </Glyph>
                </IconButton>
              </ButtonStrip>
            </ParamGroup>

            <Graphics>
              <Picture>
                <PlateSketch />
              </Picture>
              <ModelView>
                <JointModel />
              </ModelView>
              <ViewStrip>
                {viewIcons.map((icon) => (
                  <IconButton key={icon.label} aria-label={icon.label} $gap={icon.gap} $pressed={icon.pressed}>
                    <Glyph>{icon.art}</Glyph>
                  </IconButton>
                ))}
              </ViewStrip>
            </Graphics>
          </Columns>
        </Main>
      </Workspace>

      <Footer>
        <IconGroup>
          <IconButton aria-label="Nápověda">
            <Glyph>
              <circle cx="37" cy="28" r="20" fill="#f4f4f4" stroke="#777" strokeWidth="3" />
              <path d="M26 43L22 54L38 47Z" fill="#f4f4f4" stroke="#777" strokeWidth="2" />
              <path d="M30 22Q31 14 39 14Q47 15 46 22Q45 27 37 33" fill="none" stroke="#2c4694" strokeWidth="5" />
              <circle cx="35" cy="41" r="3" fill="#2c4694" />
            </Glyph>
          </IconButton>
          <IconButton aria-label="Předchozí tabulka" $gap={4}>
            <WindowArrow back />
          </IconButton>
          <IconButton aria-label="Další tabulka">
            <WindowArrow />
          </IconButton>
        </IconGroup>
        <DialogButton $wide disabled>Výpočet</DialogButton>
        <DialogButton $wide>Detaily</DialogButton>
        <DialogButton $wide>Nár. příloha...</DialogButton>
        <DialogButton $wide $offset="90px">Grafika</DialogButton>
        <DialogButton $main $offset="auto">OK</DialogButton>
        <DialogButton>Storno</DialogButton>
      </Footer>
      <StatusBar />
    </Window>
  );
}
